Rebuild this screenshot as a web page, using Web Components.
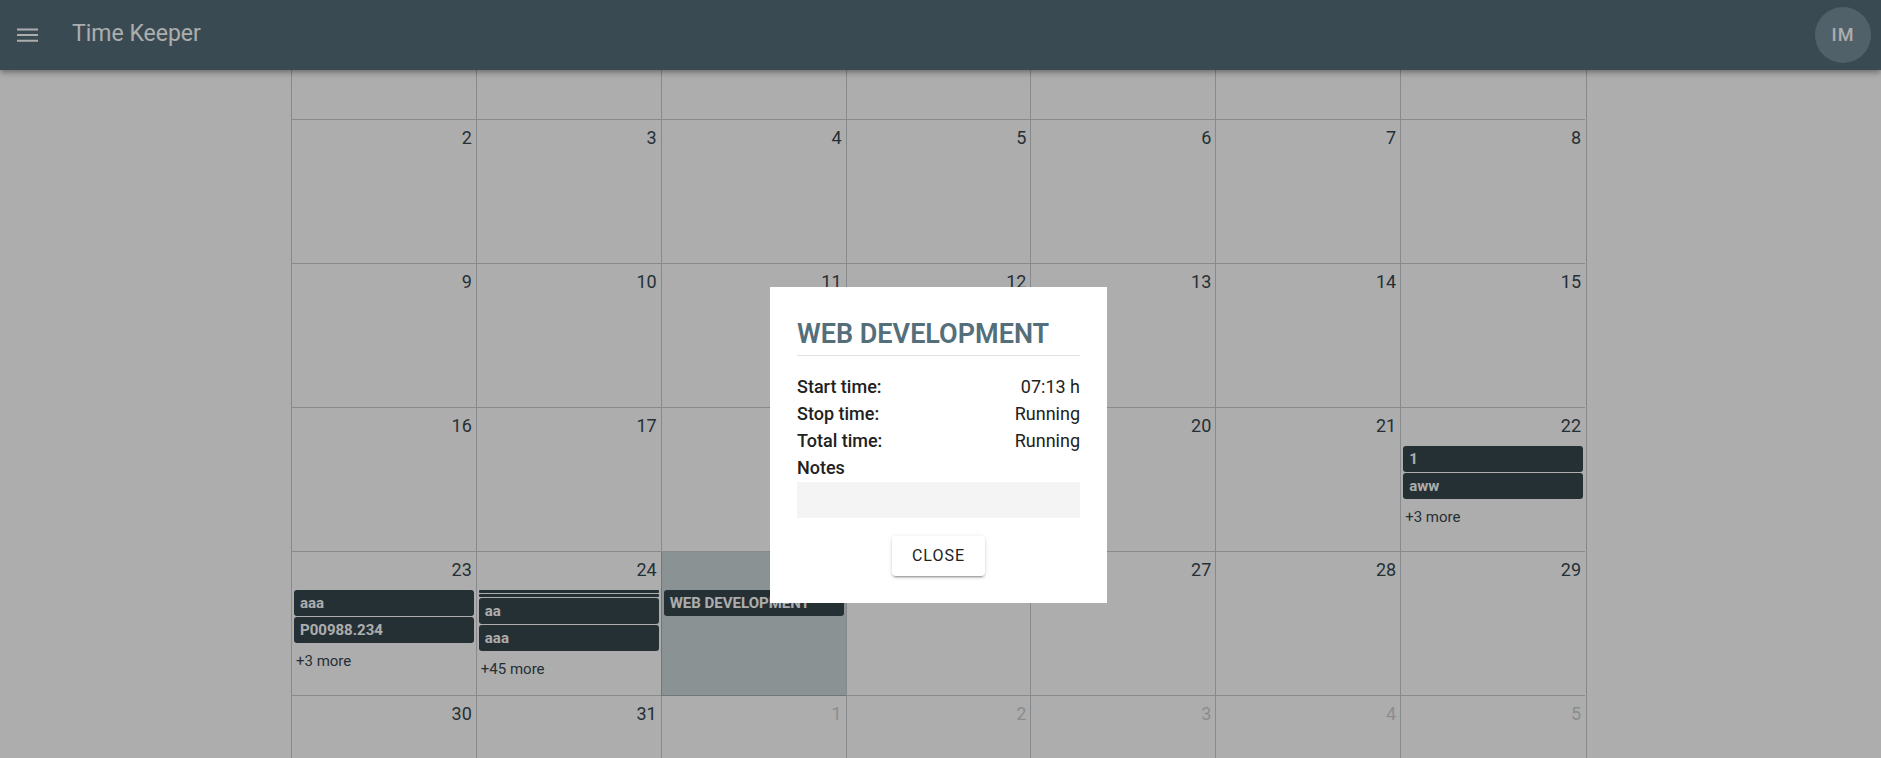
<!DOCTYPE html>
<html lang="en">
<head>
<meta charset="utf-8">
<title>Time Keeper</title>
<style>
  html, body { margin: 0; height: 100%; }
  body {
    font: 18px/27px Roboto, sans-serif;
    color: #212121;
    background: #fff;
    overflow: hidden;
    --primary: #546e7a;
    --dark: #37474f;
    --line: rgba(55, 71, 79, .28);
  }
</style>
</head>
<body>
<time-keeper-app>
  <app-bar slot="bar" heading="Time Keeper" initials="IM"></app-bar>
  <month-calendar></month-calendar>
  <entry-dialog slot="dialog" heading="WEB DEVELOPMENT">
    <entry-row label="Start time:">07:13 h</entry-row>
    <entry-row label="Stop time:">Running</entry-row>
    <entry-row label="Total time:">Running</entry-row>
  </entry-dialog>
</time-keeper-app>

<script>
const define = (name, html, setup) => customElements.define(name, class extends HTMLElement {
  constructor() {
    super();
    this.attachShadow({ mode: 'open' }).innerHTML = html;
  }
  connectedCallback() { if (setup) setup(this, this.shadowRoot); }
});

define('time-keeper-app', `
  <style>
    :host { display: flex; flex-direction: column; height: 100vh; }
    main { flex: 1; min-height: 0; overflow: hidden; padding: 0 3px 0 0; }
  </style>
  <slot name="bar"></slot>
  <main><slot></slot></main>
  <slot name="dialog"></slot>`);

define('app-bar', `
  <style>
    :host { display: block; position: relative; z-index: 1; background: var(--primary); color: #fff;
      box-shadow: 0 2px 4px -1px rgba(0,0,0,.2), 0 4px 5px rgba(0,0,0,.14), 0 1px 10px rgba(0,0,0,.12); }
    header { display: flex; align-items: center; height: 70px; padding: 0 10px 0 14px; }
    button { border: 0; padding: 0; color: inherit; font: inherit; background: none; }
    .menu { display: flex; }
    h1 { flex: 1; margin: 0 0 4px 31px; font-size: 23px; font-weight: 400; }
    .avatar { width: 56px; height: 56px; padding-bottom: 2px; border-radius: 50%; background: #78909c;
      font-weight: 500; letter-spacing: 1px; }
  </style>
  <header>
    <button class="menu" aria-label="Open menu">
      <svg width="27" height="27" viewBox="0 0 27 27" fill="currentColor"><path d="M3 6.5h21v2H3zm0 5.5h21v2H3zm0 5.7h21v2H3z"/></svg>
    </button>
    <h1></h1>
    <button class="avatar"></button>
  </header>`, (el, root) => {
  root.querySelector('h1').textContent = el.getAttribute('heading');
  root.querySelector('.avatar').textContent = el.getAttribute('initials');
});

define('calendar-event', `
  <style>
    :host { display: block; }
    button { display: block; width: 100%; height: 26px; padding: 0 6px; border: 0; border-radius: 3px;
      background: var(--dark); color: #fff; font: 700 15px/26px Roboto, sans-serif; text-align: left; }
    :host([thin]) button { height: 3px; border-radius: 1px; }
  </style>
  <button><slot></slot></button>`);

define('calendar-day', `
  <style>
    :host { display: block; box-sizing: border-box; height: 144px; padding: 4px 2px 0;
      border: solid var(--line); border-width: 0 0 1px 1px; min-width: 0; }
    :host([today]) { background: #ccd8da; }
    :host([clipped]) { height: 50px; }
    time { display: block; padding: 0 2px 0 0; margin-bottom: 7px; text-align: right; color: var(--dark); }
    :host([outside]) time { opacity: .25; }
    :host([covered]) time { visibility: hidden; }
    .events { display: grid; gap: 1px; }
    a { display: block; padding: 6px 2px; font-size: 15px; line-height: 24px; color: var(--dark); text-decoration: none; }
  </style>
  <time>&nbsp;</time>
  <div class="events"><slot></slot></div>`, (el, root) => {
  if (el.hasAttribute('day')) root.querySelector('time').textContent = el.getAttribute('day');
  if (el.hasAttribute('more')) {
    const link = document.createElement('a');
    link.href = '#';
    link.textContent = '+' + el.getAttribute('more') + ' more';
    root.append(link);
  }
});

const entries = {
  22: { events: ['1', 'aww'], more: 3 },
  23: { events: ['aaa', 'P00988.234'], more: 3 },
  24: { events: ['', '', 'aa', 'aaa'], more: 45 },
  25: { events: ['WEB DEVELOPMENT'] }
};
// Days whose number lies under the open dialog.
const covered = [18, 19, 25, 26];

define('month-calendar', `
  <style>
    :host { display: grid; grid-template-columns: repeat(7, minmax(0, 1fr)); box-sizing: border-box;
      max-width: 1296px; margin: 0 auto; padding-right: 1px; border-right: 1px solid var(--line); }
  </style>`, (el, root) => {
  for (let i = 0; i < 42; i++) {
    const cell = document.createElement('calendar-day');
    const day = i - 5;
    if (i < 7) cell.setAttribute('clipped', '');
    else cell.setAttribute('day', day > 31 ? day - 31 : day);
    if (day > 31) cell.setAttribute('outside', '');
    if (day === 25) cell.setAttribute('today', '');
    if (covered.includes(day)) cell.setAttribute('covered', '');
    const entry = entries[day];
    if (entry) {
      if (entry.more) cell.setAttribute('more', entry.more);
      for (const name of entry.events) {
        const event = document.createElement('calendar-event');
        event.textContent = name;
        if (!name) event.setAttribute('thin', '');
        cell.append(event);
      }
    }
    root.append(cell);
  }
});

define('entry-row', `
  <style>
    :host { display: flex; justify-content: space-between; }
    b { font-weight: 500; }
  </style>
  <b></b><span><slot></slot></span>`, (el, root) => {
  root.querySelector('b').textContent = el.getAttribute('label');
});

define('entry-dialog', `
  <style>
    :host { position: fixed; inset: 0; z-index: 2; display: grid; place-items: center;
      padding-right: 4px; background: rgba(0,0,0,.32); }
    section { box-sizing: border-box; width: 337px; padding: 27px; margin-top: 132px; background: #fff;
      display: flex; flex-direction: column; }
    h2 { margin: 0 0 17px; font-size: 27px; line-height: 41px; font-weight: 600; color: var(--primary);
      border-bottom: 1px solid #e0e0e0; }
    label { font-weight: 500; padding-bottom: 1px; }
    textarea { display: block; box-sizing: border-box; width: 100%; height: 36px; padding: 4px 9px; border: 0;
      background: #f4f4f4; font: inherit; resize: none; }
    button { align-self: center; height: 40px; margin-top: 18px; padding: 0 20px; border: 0; border-radius: 4px;
      background: #fff; color: #212121; font: 400 16px/40px Roboto, sans-serif; letter-spacing: 1px;
      box-shadow: 0 3px 1px -2px rgba(0,0,0,.2), 0 2px 2px rgba(0,0,0,.14), 0 1px 5px rgba(0,0,0,.12); }
  </style>
  <section role="dialog" aria-labelledby="heading">
    <h2 id="heading"></h2>
    <slot></slot>
    <label for="notes">Notes</label>
    <textarea id="notes" readonly></textarea>
    <button>CLOSE</button>
  </section>`, (el, root) => {
  root.querySelector('h2').textContent = el.getAttribute('heading');
});
</script>
</body>
</html>
